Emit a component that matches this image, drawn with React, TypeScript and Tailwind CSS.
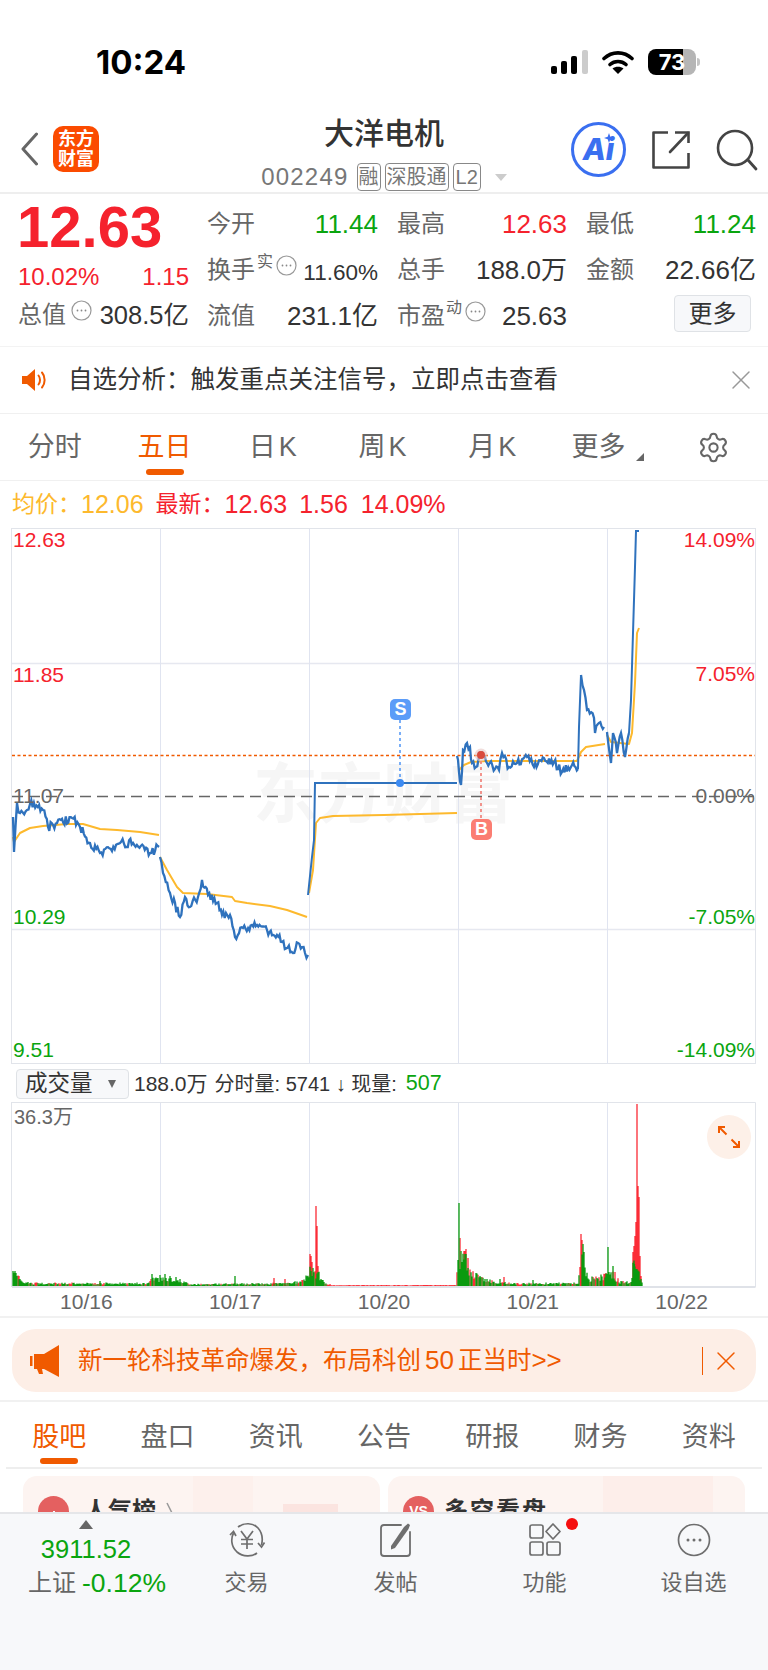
import React from 'react';
import { Settings, X } from 'lucide-react';

// small seeded random so the chart noise stays the same on every render
const makeRand = (seed: number) => () => {
    seed = (seed * 16807) % 2147483647;
    return (seed - 1) / 2147483646;
};

type Pt = [number, number];

const noisyPath = (pts: Pt[], amp: number, seed: number) => {
    const rand = makeRand(seed * 7919);
    let d = `M${pts[0][0]} ${pts[0][1]}`;
    for (let i = 1; i < pts.length; i++) {
        const [x0, y0] = pts[i - 1];
        const [x1, y1] = pts[i];
        const steps = Math.max(1, Math.round((x1 - x0) / 1.3));
        for (let s = 1; s <= steps; s++) {
            const t = s / steps;
            const j = s === steps ? 0 : (rand() - 0.5) * 2 * amp;
            d += `L${(x0 + (x1 - x0) * t).toFixed(1)} ${(y0 + (y1 - y0) * t + j).toFixed(1)}`;
        }
    }
    return d;
};

const smoothPath = (pts: Pt[]) => pts.map((p, i) => `${i ? 'L' : 'M'}${p[0]} ${p[1]}`).join('');

const priceDays: Pt[][] = [
    [[13, 817], [14, 852], [17, 803], [20, 813], [27, 810], [30, 804], [43, 810], [48, 827], [57, 823], [72, 818], [80, 827], [90, 843], [100, 853], [120, 843], [133, 843], [150, 853], [159, 847]],
    [[160, 857], [163, 873], [170, 893], [180, 917], [185, 897], [190, 907], [198, 897], [202, 880], [208, 895], [217, 903], [222, 915], [230, 915], [235, 937], [243, 928], [257, 925], [267, 930], [277, 935], [282, 942], [293, 953], [298, 943], [305, 953], [308, 955]],
    [[457, 756], [459, 772], [461, 785], [463, 750], [467, 743], [470, 747], [472, 763], [476, 767], [481, 753], [487, 763], [499, 770], [502, 753], [509, 767], [517, 763], [527, 757], [534, 767], [544, 758], [554, 762], [562, 772], [572, 765], [578, 769]],
    [[581, 675], [584, 690], [587, 710], [594, 718], [595, 733], [599, 723], [604, 727]],
    [[607, 732], [611, 763], [613, 733], [617, 753], [621, 733], [625, 757], [629, 733]],
];

const day3Line: Pt[] = [[308, 895], [312, 857], [314, 840], [315, 783], [457, 783]];
const day4Spike: Pt[] = [[578, 769], [579, 727], [581, 675]];
const day5Rise: Pt[] = [[629, 733], [631, 700], [633, 633], [635, 567], [636, 531], [639, 531]];

const avgDays: Pt[][] = [
    [[13, 837], [14, 842], [20, 833], [30, 828], [43, 826], [67, 824], [83, 824], [100, 829], [117, 830], [140, 832], [159, 835]],
    [[160, 857], [167, 870], [177, 887], [183, 893], [207, 894], [232, 897], [235, 901], [247, 903], [270, 906], [287, 910], [307, 917]],
    [[309, 893], [313, 870], [316, 823], [320, 818], [333, 816], [384, 815], [457, 813]],
    [[459, 770], [464, 765], [471, 762], [487, 761], [577, 761], [581, 752], [586, 747], [605, 744]],
    [[607, 735], [611, 742], [629, 744], [632, 733], [635, 683], [637, 633], [639, 628]],
];

// volume envelope: [x, height]
const volEnvelope: Pt[] = [
    [13, 14], [18, 12], [22, 6], [30, 3], [100, 3], [148, 3], [152, 8], [180, 7], [190, 2], [290, 3], [303, 6], [308, 18], [320, 12], [326, 3], [332, 1],
    [456, 1], [458, 36], [466, 30], [472, 14], [480, 9], [495, 4], [520, 3], [578, 3], [582, 36], [586, 18], [590, 8], [604, 12], [612, 14], [620, 5], [630, 4], [632, 14], [634, 28], [642, 4],
];

const volPeaks: [number, number, 'r' | 'g'][] = [
    [13, 15, 'g'], [15, 15, 'g'], [19, 10, 'r'], [100, 5, 'g'], [152, 12, 'g'], [160, 11, 'g'], [165, 12, 'g'], [170, 10, 'g'], [176, 9, 'g'], [235, 10, 'g'], [274, 8, 'r'], [285, 7, 'r'],
    [310, 32, 'r'], [311, 30, 'r'], [312, 24, 'r'], [313, 18, 'g'], [316, 80, 'r'], [317, 60, 'r'], [318, 20, 'r'],
    [460, 48, 'r'], [459, 83, 'g'], [462, 24, 'g'], [464, 35, 'r'], [465, 35, 'r'], [466, 37, 'r'], [468, 28, 'r'], [470, 14, 'r'], [477, 7, 'g'], [483, 5, 'g'], [500, 7, 'g'], [504, 9, 'r'], [533, 6, 'g'], [557, 3, 'g'], [564, 3, 'g'],
    [581, 52, 'r'], [582, 46, 'r'], [583, 42, 'g'], [584, 34, 'g'], [585, 18, 'g'], [605, 12, 'r'], [606, 13, 'r'], [608, 39, 'g'], [609, 14, 'g'], [613, 20, 'g'], [615, 14, 'r'],
    [633, 34, 'r'], [634, 40, 'r'], [635, 50, 'r'], [636, 64, 'r'], [637, 182, 'r'], [638, 100, 'r'], [639, 89, 'r'], [640, 30, 'r'], [641, 10, 'r'], [634.5, 22, 'g'],
];

const buildVolume = () => {
    const rand = makeRand(4217 * 7919);
    const base = 1286;
    let red = '';
    let green = '';
    for (let x = 13; x <= 642; x++) {
        let h = 1;
        for (let i = 1; i < volEnvelope.length; i++) {
            const [x0, h0] = volEnvelope[i - 1];
            const [x1, h1] = volEnvelope[i];
            if (x >= x0 && x <= x1) {
                h = h0 + ((h1 - h0) * (x - x0)) / (x1 - x0);
                break;
            }
        }
        h = h * (0.45 + rand() * 0.7);
        const seg = `M${x} ${base}V${(base - h).toFixed(1)}`;
        const quiet = x > 326 && x < 456;
        if (quiet || rand() < 0.28) red += seg;
        else green += seg;
    }
    volPeaks.forEach(([x, h, c]) => {
        const seg = `M${x} ${base}V${base - h}`;
        if (c === 'r') red += seg;
        else green += seg;
    });
    return { red, green };
};

const volume = buildVolume();

const DotsBubble = () => (
    <svg width="21" height="21" viewBox="0 0 21 21" fill="none" className="shrink-0">
        <circle cx="10.5" cy="10.5" r="9.5" stroke="#999" strokeWidth="1.2" />
        <circle cx="6.5" cy="10.5" r="0.9" fill="#888" />
        <circle cx="10.5" cy="10.5" r="0.9" fill="#888" />
        <circle cx="14.5" cy="10.5" r="0.9" fill="#888" />
    </svg>
);

const Stat = ({ label, value, color = 'text-[#333]' }: { label: string; value: string; color?: string }) => (
    <div className="flex items-center justify-between h-[46px] whitespace-nowrap">
        <span className="text-[24px] text-[#666]">{label}</span>
        <span className={`text-[26px] ${color}`}>{value}</span>
    </div>
);

const chartTabs = ['分时', '五日', '日K', '周K', '月K', '更多'];
const infoTabs = ['股吧', '盘口', '资讯', '公告', '研报', '财务', '资料'];

const App = () => {
    return (
        <div className="w-[768px] h-[1670px] bg-white overflow-hidden [font-family:'Liberation_Sans','Noto_Sans_CJK_SC',sans-serif]">
            {/* Status bar */}
            <div className="h-[110px] flex items-start pt-[44px] pl-[96px] pr-[68px]">
                <span className="text-[33px] leading-[36px] font-bold text-black [font-family:Inter,sans-serif]">10:24</span>
                <div className="ml-auto flex items-center gap-[14px] h-[36px]">
                    <svg width="37" height="24" viewBox="0 0 37 24">
                        <rect x="0" y="16" width="6" height="8" rx="2" fill="#000" />
                        <rect x="10" y="11" width="6" height="13" rx="2" fill="#000" />
                        <rect x="20" y="6" width="6" height="18" rx="2" fill="#000" />
                        <rect x="31" y="0" width="6" height="24" rx="2" fill="#ccc" />
                    </svg>
                    <svg width="32" height="24" viewBox="0 0 32 24" fill="none">
                        <path d="M2 8.5C10 1 22 1 30 8.5" stroke="#000" strokeWidth="3.6" strokeLinecap="round" />
                        <path d="M8 14.5C12.5 10.5 19.5 10.5 24 14.5" stroke="#000" strokeWidth="3.6" strokeLinecap="round" />
                        <path d="M16 24L10.5 18.5C13.5 16 18.5 16 21.5 18.5Z" fill="#000" />
                    </svg>
                    <div className="flex items-center">
                        <div className="relative w-[48px] h-[26px] rounded-[8px] overflow-hidden flex">
                            <div className="w-[35px] bg-black" />
                            <div className="flex-1 bg-[#b5b5b5]" />
                            <span className="absolute inset-0 flex items-center justify-center text-[22px] font-bold text-white [font-family:Inter,sans-serif]">73</span>
                        </div>
                        <span className="ml-[1px] w-[3px] h-[8px] rounded-r-full bg-[#c4c4c4]" />
                    </div>
                </div>
            </div>

            {/* Header */}
            <div className="h-[84px] flex border-b-2 border-[#eeeeee]">
                <div className="w-[200px] flex items-start pt-[16px] pl-[21px] gap-[15px]">
                    <svg width="17" height="34" viewBox="0 0 17 34" fill="none" className="mt-[6px]">
                        <path d="M15.5 2L2 17L15.5 32" stroke="#666" strokeWidth="3" strokeLinecap="round" strokeLinejoin="round" />
                    </svg>
                    <div className="w-[46px] h-[46px] rounded-[10px] bg-[#fb4b00] flex flex-col items-center justify-center text-white text-[18px] leading-[20px] font-bold">
                        <span>东方</span>
                        <span>财富</span>
                    </div>
                </div>
                <div className="flex-1 flex flex-col items-center">
                    <div className="text-[30px] leading-[46px] mt-[1px] text-[#333] font-medium">大洋电机</div>
                    <div className="flex items-center mt-[2px] text-[#777]">
                        <span className="text-[24px] tracking-[1.2px] mr-[8px]">002249</span>
                        <span className="border border-[#888] rounded-[4px] h-[28px] px-[1px] text-[20px] leading-[26px] mr-[4px]">融</span>
                        <span className="border border-[#888] rounded-[4px] h-[28px] px-[1px] text-[20px] leading-[26px] mr-[4px]">深股通</span>
                        <span className="border border-[#888] rounded-[4px] h-[28px] px-[2px] text-[20px] leading-[26px]">L2</span>
                        <span className="ml-[14px] w-0 h-0 border-x-[6px] border-x-transparent border-t-[7px] border-t-[#ccc]" />
                    </div>
                </div>
                <div className="w-[200px] flex items-start pl-[3px] pt-[12px]">
                    <div className="relative w-[55px] h-[55px] rounded-full border-[3px] border-[#3a6ff0] flex items-center justify-center">
                        <span className="text-[30px] font-extrabold italic text-[#3a6ff0] [font-family:Inter,sans-serif]">Ai</span>
                        <svg width="10" height="10" viewBox="0 0 10 10" className="absolute top-[8px] right-[9px]">
                            <path d="M5 0L6.3 3.7L10 5L6.3 6.3L5 10L3.7 6.3L0 5L3.7 3.7Z" fill="#3a6ff0" />
                        </svg>
                    </div>
                    <svg width="38" height="38" viewBox="0 0 38 38" fill="none" className="ml-[26px] mt-[9px]">
                        <path d="M16 1.5H1.5V36.5H36.5V22" stroke="#444" strokeWidth="2.6" strokeLinejoin="round" />
                        <path d="M23 1.5H36.5V12" stroke="#444" strokeWidth="2.6" />
                        <path d="M36 2L18 21" stroke="#444" strokeWidth="2.6" strokeLinecap="round" />
                    </svg>
                    <svg width="42" height="42" viewBox="0 0 42 42" fill="none" className="ml-[26px] mt-[7px]">
                        <circle cx="19" cy="19" r="17" stroke="#444" strokeWidth="2.6" />
                        <path d="M32 31L40 40" stroke="#444" strokeWidth="2.8" strokeLinecap="round" />
                    </svg>
                </div>
            </div>

            {/* Quote stats */}
            <div className="h-[153px] flex pl-[18px] pr-[12px] pt-[6px] border-b border-[#f3f3f3]">
                <div className="w-[171px] mr-[18px]">
                    <div className="h-[58px] text-[58px] leading-[54px] font-bold text-[#f5222d] -ml-[1px]">12.63</div>
                    <div className="h-[38px] flex items-center justify-between text-[24px] text-[#f5222d]">
                        <span>10.02%</span>
                        <span>1.15</span>
                    </div>
                    <div className="h-[38px] flex items-center whitespace-nowrap">
                        <span className="text-[24px] text-[#666]">总值</span>
                        <span className="-mt-[10px] ml-[5px]"><DotsBubble /></span>
                        <span className="ml-auto text-[25.5px] text-[#333]">308.5亿</span>
                    </div>
                </div>
                <div className="flex-1 grid grid-cols-[171px_170px_170px] gap-x-[19px] auto-rows-[46px] pt-[1px]">
                    <Stat label="今开" value="11.44" color="text-[#0aa50f]" />
                    <Stat label="最高" value="12.63" color="text-[#f5222d]" />
                    <Stat label="最低" value="11.24" color="text-[#0aa50f]" />
                    <div className="flex items-center h-[46px] whitespace-nowrap">
                        <span className="text-[24px] text-[#666]">换手</span>
                        <span className="text-[16px] text-[#666] -mt-[16px] ml-[2px]">实</span>
                        <span className="-mt-[10px] ml-[3px]"><DotsBubble /></span>
                        <span className="ml-auto text-[22.5px] text-[#333] mt-[5px]">11.60%</span>
                    </div>
                    <Stat label="总手" value="188.0万" />
                    <Stat label="金额" value="22.66亿" />
                    <Stat label="流值" value="231.1亿" />
                    <div className="flex items-center h-[46px] whitespace-nowrap">
                        <span className="text-[24px] text-[#666]">市盈</span>
                        <span className="text-[16px] text-[#666] -mt-[16px] ml-[1px]">动</span>
                        <span className="-mt-[10px] ml-[3px]"><DotsBubble /></span>
                        <span className="ml-auto text-[26px] text-[#333]">25.63</span>
                    </div>
                    <div className="flex items-center justify-end">
                        <div className="w-[77px] h-[37px] mr-[5px] -mt-[5px] rounded-[4px] bg-[#f7f8fa] border border-[#dfe2e6] flex items-center justify-center text-[24px] text-[#333]">更多</div>
                    </div>
                </div>
            </div>

            {/* Notice */}
            <div className="h-[67px] flex items-center pl-[21px] pr-[11px] border-b border-[#f0f0f0]">
                <svg width="26" height="26" viewBox="0 0 26 26" fill="none">
                    <path d="M1 9H6L14 2V24L6 17H1Z" fill="#f05a00" />
                    <path d="M17.5 8.5C19.5 11 19.5 15 17.5 17.5" stroke="#f05a00" strokeWidth="2" strokeLinecap="round" />
                    <path d="M21 5.5C24.5 9.5 24.5 16.5 21 20.5" stroke="#f05a00" strokeWidth="2" strokeLinecap="round" />
                </svg>
                <span className="ml-[21px] text-[24.5px] text-[#333]">{'自选分析\uFF1A触发重点关注信号\uFF0C立即点击查看'}</span>
                <X size={32} strokeWidth={1.1} className="ml-auto text-[#999]" />
            </div>

            {/* Chart period tabs */}
            <div className="relative h-[67px] grid grid-cols-7 border-b border-[#f0f0f0]">
                {chartTabs.map((t, i) => (
                    <div key={t} className="relative flex justify-center pt-[16px]">
                        <span className={`text-[27px] leading-[34px] ${t.endsWith('K') ? 'tracking-[3px]' : ''} ${i === 1 ? 'text-[#f05a00]' : 'text-[#666]'} ${i === 5 ? 'mr-[10px]' : ''}`}>{t}</span>
                        {i === 1 && <span className="absolute bottom-[5px] w-[38px] h-[6px] rounded-full bg-[#f05a00]" />}
                        {i === 5 && <span className="absolute top-[39px] right-[14px] w-0 h-0 border-l-[8px] border-l-transparent border-b-[8px] border-b-[#666]" />}
                    </div>
                ))}
                <div className="flex justify-center pt-[17px]">
                    <Settings size={33} strokeWidth={1.5} className="text-[#666]" />
                </div>
            </div>

            {/* Average and latest */}
            <div className="h-[47px] flex items-center pl-[12px] text-[25px] whitespace-nowrap">
                <span className="text-[#fdb92d] text-[23px]">{'均价\uFF1A'}</span>
                <span className="text-[#fdb92d]">12.06</span>
                <span className="text-[#f5222d] text-[23px] ml-[12px]">{'最新\uFF1A'}</span>
                <span className="text-[#f5222d]">12.63</span>
                <span className="text-[#f5222d] ml-[12px]">1.56</span>
                <span className="text-[#f5222d] ml-[13px]">14.09%</span>
            </div>

            {/* Price chart */}
            <div className="relative h-[537px]">
                <div className="absolute left-[253px] top-[232px] text-[65px] leading-[70px] font-bold text-[#f6f6f6]">东方财富</div>
                <svg width="768" height="537" viewBox="0 528 768 537" fill="none" className="absolute inset-0">
                    <rect x="11.5" y="528.5" width="744" height="535" stroke="#e1e4ea" />
                    <path d="M12 663.5H755M12 929.5H755" stroke="#e6e8f0" strokeWidth="1.5" />
                    <path d="M160.5 529V1064M309.5 529V1064M458.5 529V1064M607.5 529V1064" stroke="#e0e4f0" />
                    <path d="M12 755.5H755" stroke="#f05a00" strokeWidth="1.5" strokeDasharray="3 2.5" />
                    <path d="M12 796.5H755" stroke="#666" strokeWidth="1.5" strokeDasharray="11 6" />
                    {avgDays.map((d, i) => (
                        <path key={i} d={smoothPath(d)} stroke="#fdb92d" strokeWidth="2" strokeLinejoin="round" />
                    ))}
                    {priceDays.map((d, i) => (
                        <path key={i} d={noisyPath(d, 4.5, 71 + i * 13)} stroke="#2f72bd" strokeWidth="2.3" strokeLinejoin="miter" />
                    ))}
                    <path d={smoothPath(day3Line)} stroke="#2f72bd" strokeWidth="2" />
                    <path d={smoothPath(day4Spike)} stroke="#2f72bd" strokeWidth="2" />
                    <path d={smoothPath(day5Rise)} stroke="#2f72bd" strokeWidth="2" />
                    <path d="M400 720V783" stroke="#4d94f5" strokeWidth="1.5" strokeDasharray="3 3" />
                    <circle cx="400" cy="783" r="4" fill="#3d8bf2" />
                    <path d="M481 755V819" stroke="#f0736a" strokeWidth="1.5" strokeDasharray="3 3" />
                    <circle cx="481" cy="755" r="6.5" fill="#e8c8c5" fillOpacity="0.6" />
                    <circle cx="481" cy="755" r="4" fill="#d94a3d" />
                </svg>
                <span className="absolute left-[13px] top-[12px] -translate-y-1/2 text-[21px] text-[#f5222d]">12.63</span>
                <span className="absolute left-[13px] top-[147px] -translate-y-1/2 text-[21px] text-[#f5222d]">11.85</span>
                <span className="absolute left-[13px] top-[268px] -translate-y-1/2 text-[21px] text-[#666]">11.07</span>
                <span className="absolute left-[13px] top-[389px] -translate-y-1/2 text-[21px] text-[#0aa50f]">10.29</span>
                <span className="absolute left-[13px] top-[522px] -translate-y-1/2 text-[21px] text-[#0aa50f]">9.51</span>
                <span className="absolute right-[13px] top-[12px] -translate-y-1/2 text-[21px] text-[#f5222d]">14.09%</span>
                <span className="absolute right-[13px] top-[146px] -translate-y-1/2 text-[21px] text-[#f5222d]">7.05%</span>
                <span className="absolute right-[13px] top-[268px] -translate-y-1/2 text-[21px] text-[#666]">0.00%</span>
                <span className="absolute right-[13px] top-[389px] -translate-y-1/2 text-[21px] text-[#0aa50f]">-7.05%</span>
                <span className="absolute right-[13px] top-[522px] -translate-y-1/2 text-[21px] text-[#0aa50f]">-14.09%</span>
                <span className="absolute left-[390px] top-[171px] w-[21px] h-[21px] rounded-[5px] bg-[#5b9cf8] text-white text-[18px] leading-[21px] font-bold text-center">S</span>
                <span className="absolute left-[471px] top-[291px] w-[21px] h-[21px] rounded-[5px] bg-[#fb7d72] text-white text-[18px] leading-[21px] font-bold text-center">B</span>
            </div>

            {/* Volume header */}
            <div className="h-[37px] flex items-center pl-[16px] whitespace-nowrap">
                <div className="w-[113px] h-[30px] rounded-[4px] bg-[#f7f8fa] border border-[#dfe2e6] flex items-center pl-[8px] text-[22.5px] text-[#333]">
                    成交量
                    <span className="ml-[15px] w-0 h-0 border-x-[4px] border-x-transparent border-t-[8px] border-t-[#666]" />
                </div>
                <span className="ml-[5px] text-[21px] text-[#333]">188.0万</span>
                <span className="ml-[7px] text-[20px] text-[#333]">分时量: 5741 ↓ 现量:</span>
                <span className="ml-[9px] text-[21.5px] text-[#0aa50f]">507</span>
            </div>

            {/* Volume chart */}
            <div className="relative h-[186px]">
                <svg width="768" height="186" viewBox="0 1102 768 186" fill="none" className="absolute inset-0">
                    <path d="M12 1102.5H755.5V1287M11.5 1102V1287" stroke="#e1e4ea" />
                    <path d="M160.5 1103V1286M309.5 1103V1286M458.5 1103V1286M607.5 1103V1286" stroke="#e0e4f0" />
                    <path d={volume.red} stroke="#fb2c36" strokeWidth="1.3" />
                    <path d={volume.green} stroke="#0a9a0f" strokeWidth="1.3" />
                    <path d="M12 1287H755.5" stroke="#dfe2e8" strokeWidth="2" />
                </svg>
                <span className="absolute left-[14px] top-[15px] -translate-y-1/2 text-[20px] text-[#666]">36.3万</span>
                <div className="absolute left-[707px] top-[13px] w-[44px] h-[44px] rounded-full bg-[#fdf0e8] flex items-center justify-center">
                    <svg width="24" height="24" viewBox="0 0 24 24" fill="none" stroke="#f05a00" strokeWidth="2">
                        <path d="M2 8V2H8M2 2L9.5 9.5" />
                        <path d="M22 16V22H16M22 22L14.5 14.5" />
                    </svg>
                </div>
            </div>

            {/* Dates */}
            <div className="h-[28px] ml-[12px] w-[744px] grid grid-cols-5 text-center text-[21px] leading-[28px] text-[#666]">
                <span>10/16</span>
                <span>10/17</span>
                <span>10/20</span>
                <span>10/21</span>
                <span>10/22</span>
            </div>

            {/* Promo banner */}
            <div className="h-[86px] pt-[11px] px-[12px] border-t-2 border-b-2 border-[#f1f1f1]">
                <div className="h-[63px] rounded-[24px] bg-[#fdeee6] flex items-center pl-[18px] pr-[14px] whitespace-nowrap">
                    <svg width="30" height="36" viewBox="0 0 30 36" fill="#f05a00">
                        <rect x="0" y="13" width="2.5" height="10" />
                        <path d="M4 11H14L29 2V34L14 26H12L13 31H9L7 26H4Z" />
                    </svg>
                    <span className="ml-[18px] text-[24.5px] text-[#f05a00]">{'新一轮科技革命爆发\uFF0C布局科创'}<span className="mx-[4px] text-[26px]">50</span>正当时<span className="text-[26px]">&gt;&gt;</span></span>
                    <span className="ml-auto w-px h-[28px] bg-[#f05a00]" />
                    <X size={32} strokeWidth={1.1} className="ml-[7px] text-[#f05a00]" />
                </div>
            </div>

            {/* Info tabs */}
            <div className="h-[67px] mx-[6px] border-b-2 border-[#eeeeee]">
                <div className="grid grid-cols-7 h-full -mx-[1px]">
                    {infoTabs.map((t, i) => (
                        <div key={t} className="relative flex justify-center pt-[18px]">
                            <span className={`text-[27px] leading-[34px] ${i === 0 ? 'text-[#f05a00]' : 'text-[#666]'}`}>{t}</span>
                            {i === 0 && <span className="absolute bottom-[3px] w-[38px] h-[6px] rounded-full bg-[#f05a00]" />}
                        </div>
                    ))}
                </div>
            </div>

            {/* Cards, cut off by the bottom bar */}
            <div className="h-[43px] overflow-hidden flex gap-[8px] pl-[23px] pt-[7px]">
                <div className="relative w-[357px] h-[120px] shrink-0 rounded-[14px] bg-[#fdf4f1] overflow-hidden">
                    <div className="absolute left-[170px] top-[0px] w-[60px] h-[120px] bg-[#fdf0ec]" />
                    <div className="absolute left-[260px] top-[28px] w-[55px] h-[90px] bg-[#fbe4e0]" />
                    <div className="relative flex items-center pl-[15px] pt-[19px]">
                        <div className="w-[31px] h-[31px] rounded-full bg-[#e46060] flex items-end justify-center gap-[2px] pb-[6px]">
                            <span className="w-[2px] h-[6px] bg-white" />
                            <span className="w-[2px] h-[10px] bg-white" />
                            <span className="w-[2px] h-[5px] bg-white" />
                        </div>
                        <span className="ml-[15px] text-[24px] leading-[32px] font-bold text-[#333]">人气榜</span>
                        <svg width="10" height="18" viewBox="0 0 10 18" fill="none" className="ml-[10px]">
                            <path d="M1 1L9 17" stroke="#999" strokeWidth="1.5" />
                        </svg>
                    </div>
                </div>
                <div className="relative w-[357px] h-[120px] shrink-0 rounded-[14px] bg-[#fdf4f1] overflow-hidden">
                    <div className="absolute left-[215px] top-[0px] w-[110px] h-[120px] bg-[#fdeeea]" />
                    <div className="relative flex items-center pl-[15px] pt-[19px]">
                        <div className="w-[31px] h-[31px] rounded-full bg-[#e46060] flex items-center justify-center text-white text-[14px] font-bold">VS</div>
                        <span className="ml-[10px] text-[24px] leading-[32px] font-bold text-[#333] tracking-[2px]">多空看盘</span>
                    </div>
                </div>
            </div>

            {/* Bottom bar */}
            <div className="relative h-[158px] bg-[#f7f8fa] border-t-2 border-[#e5e6e9] flex">
                <div className="w-[172px] flex flex-col items-center pt-[6px]">
                    <span className="w-0 h-0 border-x-[7px] border-x-transparent border-b-[9px] border-b-[#666]" />
                    <span className="text-[25.5px] leading-[30px] mt-[5px] text-[#0aa50f]">3911.52</span>
                    <div className="flex items-center mt-[4px] whitespace-nowrap self-start ml-[28px]">
                        <span className="text-[24px] leading-[30px] text-[#666]">上证</span>
                        <span className="text-[26.5px] leading-[30px] text-[#0aa50f] ml-[6px]">-0.12%</span>
                    </div>
                </div>
                <div className="w-[149px] flex flex-col items-center pt-[8px]">
                    <svg width="38" height="36" viewBox="0 0 38 36" fill="none" stroke="#6e6e6e" strokeWidth="1.7">
                        <path d="M5.5 11C3 16 2.5 24 9 30C15 35 24 35 29 31" />
                        <path d="M10 5C16 0.5 25 0.5 30 6C34 10.5 35 17 33.5 23" />
                        <path d="M2 13L5.5 9.5L8 14" />
                        <path d="M30 21L33.5 25L36.5 20.5" />
                        <path d="M13 9L19 17L25 9M19 17V27M13 17.5H25M13 22H25" />
                    </svg>
                    <span className="mt-[10px] text-[22px] leading-[30px] text-[#666]">交易</span>
                </div>
                <div className="w-[149px] flex flex-col items-center pt-[8px]">
                    <svg width="34" height="36" viewBox="0 0 34 36" fill="none" stroke="#6e6e6e" strokeWidth="1.8">
                        <path d="M22 3H5C3 3 2 4 2 6V31C2 33 3 34 5 34H28C30 34 31 33 31 31V10" strokeLinecap="round" />
                        <path d="M12 24L25 5L29 1.5L31 3L29.5 7L16 26L12 27.5Z" fill="#6e6e6e" stroke="none" />
                    </svg>
                    <span className="mt-[10px] text-[22px] leading-[30px] text-[#666]">发帖</span>
                </div>
                <div className="relative w-[149px] flex flex-col items-center pt-[8px]">
                    <svg width="32" height="36" viewBox="0 0 32 36" fill="none" stroke="#6e6e6e" strokeWidth="1.7">
                        <rect x="1" y="3" width="13" height="13" rx="2" />
                        <rect x="1" y="20" width="13" height="13" rx="2" />
                        <rect x="18" y="20" width="13" height="13" rx="2" />
                        <path d="M24 2L31 9.5L24 17L17 9.5Z" strokeLinejoin="round" />
                    </svg>
                    <span className="mt-[10px] text-[22px] leading-[30px] text-[#666]">功能</span>
                    <span className="absolute left-[96px] top-[4px] w-[12px] h-[12px] rounded-full bg-[#f50f0f]" />
                </div>
                <div className="w-[149px] flex flex-col items-center pt-[8px]">
                    <svg width="34" height="36" viewBox="0 0 34 36" fill="none">
                        <circle cx="17" cy="18" r="15.5" stroke="#6e6e6e" strokeWidth="1.7" />
                        <circle cx="11" cy="18" r="1.5" fill="#6e6e6e" />
                        <circle cx="17" cy="18" r="1.5" fill="#6e6e6e" />
                        <circle cx="23" cy="18" r="1.5" fill="#6e6e6e" />
                    </svg>
                    <span className="mt-[10px] text-[22px] leading-[30px] text-[#666]">设自选</span>
                </div>
            </div>
        </div>
    );
};

export default App;
